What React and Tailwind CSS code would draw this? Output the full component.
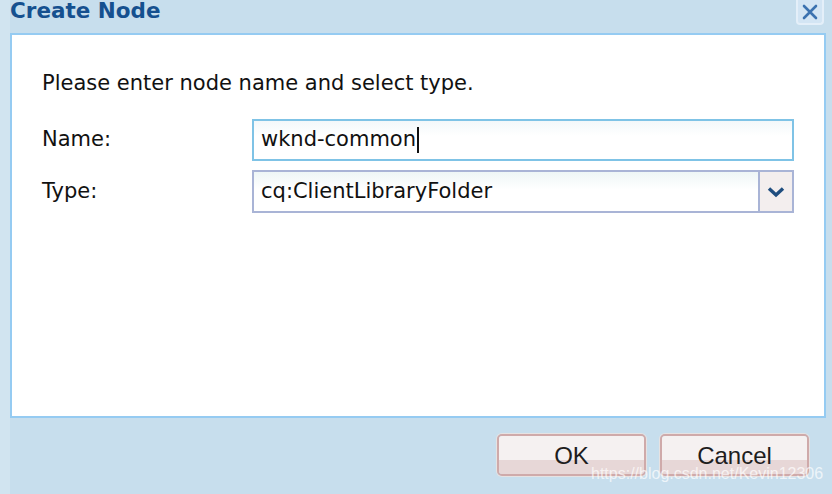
import React from 'react';

// Create Node dialog, old ExtJS / CRXDE look
const CloseButton = () => (
  <div className="w-[28px] h-[25px] rounded-b-[4px] border-2 border-t-0 border-[#e4eff9] bg-[#d3e5f4] flex items-center justify-center">
    <svg width="18" height="18" viewBox="0 0 18 18">
      <path d="M3 3 L15 15 M15 3 L3 15" stroke="#3b72b0" strokeWidth="2.6" strokeLinecap="round" />
    </svg>
  </div>
);

const DialogButton = ({ label }) => (
  <div className="w-[149px] h-[42px] rounded-[5px] border-2 border-[#cfaaaa] overflow-hidden flex flex-col relative shadow-[0_0_0_1px_#e6e2e2]">
    <div className="h-[24px] bg-[#f5f1f1]" />
    <div className="flex-1 bg-[#e7d7d7]" />
    <span className="absolute inset-0 flex items-center justify-center pt-[1px] text-[24px] text-[#1e1e1e] font-['Liberation_Sans',Arial,sans-serif]">
      {label}
    </span>
  </div>
);

export default function App() {
  return (
    <div className="w-[832px] h-[494px] bg-[#c7deed] border-l-[10px] border-[#d1e4f0] relative overflow-hidden flex flex-col font-['DejaVu_Sans',Verdana,sans-serif]">
      {/* header */}
      <div className="h-[33px] flex items-start justify-between pr-[8px] shrink-0">
        <div className="text-[21.5px] leading-[24px] font-bold text-[#15508f] -mt-[1px]">Create Node</div>
        <CloseButton />
      </div>

      {/* body */}
      <div className="h-[385px] mr-[6px] border-2 border-[#95cbf2] bg-white pl-[30px] pr-[30px] pt-[35px] shrink-0">
        <div className="text-[21px] leading-[26px] text-[#111]">Please enter node name and select type.</div>

        <div className="mt-[23px] flex items-center">
          <div className="w-[210px] text-[21px] text-[#111]">Name:</div>
          <div className="flex-1 h-[42px] border-2 border-[#7fc3e6] bg-[linear-gradient(#f3f8fa,#ffffff_40%)] flex items-center pl-[7px]">
            <span className="text-[21px] text-[#111]">wknd-common</span>
            <span className="w-[2px] h-[26px] bg-[#111] ml-[1px]" />
          </div>
        </div>

        <div className="mt-[9px] flex items-center">
          <div className="w-[210px] text-[21px] text-[#111]">Type:</div>
          <div className="flex-1 h-[43px] border-2 border-[#a9b4d6] bg-[linear-gradient(#eef6f6,#ffffff_45%)] flex">
            <div className="flex-1 flex items-center pl-[7px] text-[21px] text-[#111]">cq:ClientLibraryFolder</div>
            <div className="w-[34px] border-l-2 border-[#a9b4d6] bg-[#f3eeee] flex items-center justify-center">
              <svg width="18" height="12" viewBox="0 0 18 12">
                <path d="M2 2.5 L9 9 L16 2.5" fill="none" stroke="#1f4d7f" strokeWidth="3.4" strokeLinejoin="miter" />
              </svg>
            </div>
          </div>
        </div>
      </div>

      {/* footer */}
      <div className="flex-1 flex justify-end items-start pt-[16px] pr-[23px] gap-[14px]">
        <DialogButton label="OK" />
        <DialogButton label="Cancel" />
      </div>

      <div className="absolute left-[581px] top-[464px] text-[16px] leading-[20px] text-white/70 font-['Liberation_Sans',Arial,sans-serif]">
        https://blog.csdn.net/Kevin12306
      </div>
    </div>
  );
}
